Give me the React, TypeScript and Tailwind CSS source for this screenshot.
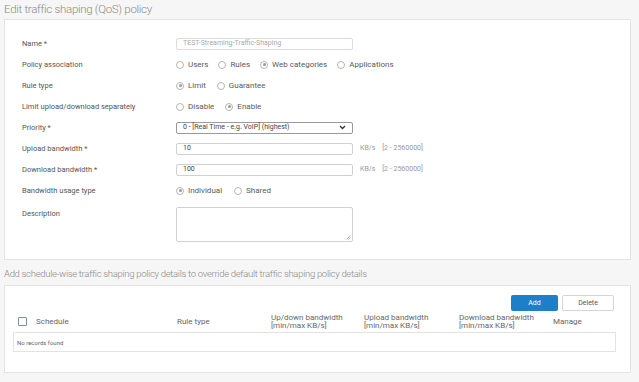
import React from "react";

const font = { fontFamily: "Roboto, 'Noto Sans', sans-serif" };

function Radio({ checked, label, gap = "mr-[10px]" }: { checked?: boolean; label: string; gap?: string }) {
  return (
    <span className={`flex items-center ${gap}`}>
      <span className="flex h-[8px] w-[8px] items-center justify-center rounded-full border border-[#b5b5b5] bg-white">
        {checked && <span className="h-[3px] w-[3px] rounded-full bg-[#9a9a9a]" />}
      </span>
      <span className="ml-[4px] text-[8px] text-[#5a5a5a]">{label}</span>
    </span>
  );
}

function Row({ label, children }: { label: string; children: React.ReactNode }) {
  return (
    <div className="flex h-[21px] items-center">
      <div className="w-[154px] shrink-0 text-[7.5px] text-[#555]">{label}</div>
      <div className="flex items-center">{children}</div>
    </div>
  );
}

export default function App() {
  return (
    <div className="h-[382px] w-[639px] overflow-hidden bg-[#f6f6f6]" style={font}>
      <div className="flex h-[19px] items-center pl-[4px] pt-[1px] text-[11.5px] font-light tracking-[-0.3px] text-[#8a8a8a]">
        Edit traffic shaping (QoS) policy
      </div>
      <div className="ml-[4px] h-[241px] w-[627px] border border-[#e3e3e3] bg-white pl-[17px] pt-[13px]">
        <Row label="Name *">
          <div className="flex h-[12px] w-[177px] items-center rounded-[2px] border border-[#dcdcdc] px-[6px] text-[7px] text-[#aaa]">
            TEST-Streaming-Traffic-Shaping
          </div>
        </Row>
        <Row label="Policy association">
          <Radio label="Users" />
          <Radio label="Rules" />
          <Radio label="Web categories" checked />
          <Radio label="Applications" />
        </Row>
        <Row label="Rule type">
          <Radio label="Limit" checked gap="mr-[11px]" />
          <Radio label="Guarantee" />
        </Row>
        <Row label="Limit upload/download separately">
          <Radio label="Disable" gap="mr-[11px]" />
          <Radio label="Enable" checked />
        </Row>
        <Row label="Priority *">
          <div className="flex h-[12px] w-[177px] items-center justify-between rounded-[2px] border border-[#9a9a9a] px-[6px] text-[7px] text-[#444]">
            <span>0 - [Real Time - e.g. VoIP] (highest)</span>
            <svg width="7" height="5" viewBox="0 0 7 5">
              <path d="M1 1l2.5 2.5L6 1" stroke="#333" strokeWidth="1.3" fill="none" />
            </svg>
          </div>
        </Row>
        <Row label="Upload bandwidth *">
          <div className="flex h-[12px] w-[177px] items-center rounded-[2px] border border-[#d0d0d0] px-[6px] text-[7px] text-[#444]">
            10
          </div>
          <span className="ml-[7px] text-[7px] text-[#999]">KB/s</span>
          <span className="ml-[7px] text-[7px] text-[#999]">[2 - 2560000]</span>
        </Row>
        <Row label="Download bandwidth *">
          <div className="flex h-[12px] w-[177px] items-center rounded-[2px] border border-[#d0d0d0] px-[6px] text-[7px] text-[#444]">
            100
          </div>
          <span className="ml-[7px] text-[7px] text-[#999]">KB/s</span>
          <span className="ml-[7px] text-[7px] text-[#999]">[2 - 2560000]</span>
        </Row>
        <Row label="Bandwidth usage type">
          <Radio label="Individual" checked gap="mr-[12px]" />
          <Radio label="Shared" />
        </Row>
        <div className="mt-[6px] flex items-start">
          <div className="w-[154px] shrink-0 pt-[1px] text-[7.5px] text-[#555]">Description</div>
          <div className="relative h-[35px] w-[177px] rounded-[2px] border border-[#d0d0d0]">
            <svg className="absolute bottom-[1px] right-[1px]" width="5" height="5" viewBox="0 0 5 5">
              <path d="M4.5 0.5L0.5 4.5M4.5 2.5L2.5 4.5" stroke="#999" strokeWidth="0.8" />
            </svg>
          </div>
        </div>
      </div>
      <div className="flex h-[25px] items-center pl-[4px] pt-[3px] text-[9.5px] font-light tracking-[-0.3px] text-[#8a8a8a]">
        Add schedule-wise traffic shaping policy details to override default traffic shaping policy details
      </div>
      <div className="ml-[4px] h-[88px] w-[627px] border border-[#e3e3e3] bg-white px-[8px] pt-[9px]">
        <div className="flex h-[16px] justify-end pr-[8px]">
          <button className="h-[16px] w-[47px] rounded-[2px] bg-[#1b7fcc] text-[7px] text-white">Add</button>
          <button className="ml-[4px] h-[16px] w-[52px] rounded-[2px] border border-[#d5d5d5] bg-white text-[7px] text-[#555]">
            Delete
          </button>
        </div>
        <div className="flex h-[21px] items-center text-[8px] leading-[8px] text-[#666]">
          <span className="ml-[5px] h-[9px] w-[9px] rounded-[1px] border border-[#7d8fa6]" />
          <span className="ml-[9px] w-[141px]">Schedule</span>
          <span className="w-[94px]">Rule type</span>
          <span className="w-[93px]">
            Up/down bandwidth
            <br />
            [min/max KB/s]
          </span>
          <span className="w-[95px]">
            Upload bandwidth
            <br />
            [min/max KB/s]
          </span>
          <span className="w-[94px]">
            Download bandwidth
            <br />
            [min/max KB/s]
          </span>
          <span>Manage</span>
        </div>
        <div className="flex h-[20px] w-[603px] items-center border border-[#e3e3e3] pl-[3px] text-[6px] text-[#666]">
          No records found
        </div>
      </div>
    </div>
  );
}
